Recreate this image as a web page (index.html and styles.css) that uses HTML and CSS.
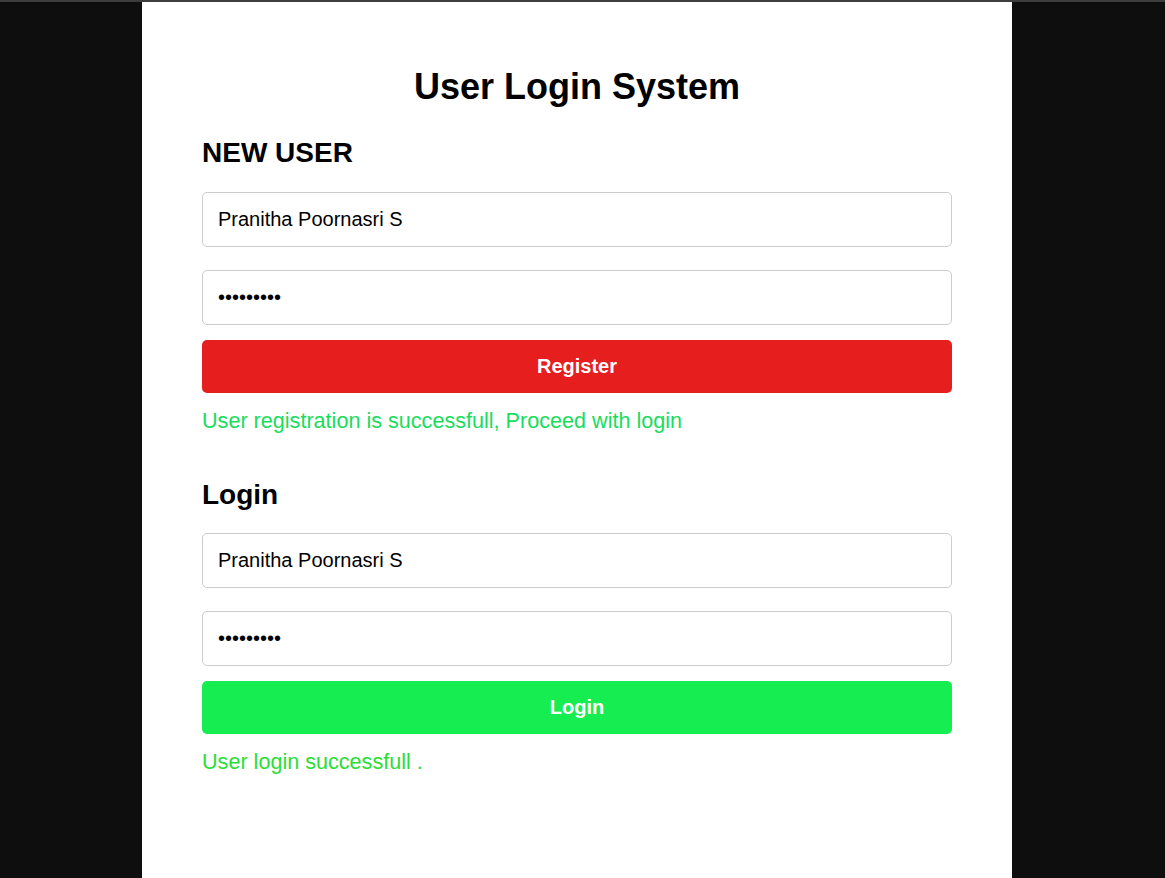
FILE: index.html
```html
<!DOCTYPE html>
<html lang="en">
<head>
<meta charset="utf-8">
<title>User Login System</title>
<link rel="stylesheet" href="styles.css">
</head>
<body>
<main class="card">
  <h1 class="title">User Login System</h1>
  <section class="block">
    <h2 class="block-title block-title-first">NEW USER</h2>
    <input class="field" type="text" value="Pranitha Poornasri S">
    <input class="field field-last" type="password" value="123456789">
    <button class="btn btn-red" type="button">Register</button>
    <p class="msg msg-reg">User registration is successfull, Proceed with login</p>
  </section>
  <section class="block">
    <h2 class="block-title">Login</h2>
    <input class="field" type="text" value="Pranitha Poornasri S">
    <input class="field field-last" type="password" value="123456789">
    <button class="btn btn-green" type="button">Login</button>
    <p class="msg msg-login">User login successfull .</p>
  </section>
</main>
</body>
</html>
```
FILE: styles.css
```css
html, body {
  margin: 0;
  padding: 0;
}
body {
  background: #0e0e0e;
  border-top: 2px solid #3d3d3d;
  min-height: 876px;
  font-family: "Liberation Sans", Arial, sans-serif;
}
.card {
  width: 870px;
  box-sizing: border-box;
  margin-left: 142px;
  min-height: 876px;
  background: #ffffff;
  padding: 64px 60px 40px;
}
.title {
  margin: 0 0 30px;
  font-size: 36px;
  line-height: 41px;
  font-weight: bold;
  text-align: center;
  color: #000;
}
.block + .block {
  margin-top: 46px;
}
.block-title {
  margin: 0 0 22px;
  font-size: 28px;
  line-height: 32px;
  font-weight: bold;
  color: #000;
}
.block-title-first {
  margin-bottom: 23px;
}
.field {
  display: block;
  width: 100%;
  box-sizing: border-box;
  margin: 0 0 23px;
  padding: 15px;
  font-family: "Liberation Sans", Arial, sans-serif;
  font-size: 20px;
  line-height: 23px;
  color: #000;
  background: #fff;
  border: 1px solid #cccccc;
  border-radius: 5px;
  outline: none;
}
.field-last {
  margin-bottom: 15px;
}
.btn {
  display: block;
  width: 100%;
  padding: 15px;
  border: none;
  border-radius: 5px;
  font-family: "Liberation Sans", Arial, sans-serif;
  font-size: 20px;
  line-height: 23px;
  font-weight: bold;
  color: #fff;
  cursor: pointer;
}
.btn-red {
  background: #e61e1e;
}
.btn-green {
  background: #16ed50;
}
.msg {
  margin: 15px 0 0;
  font-size: 21.6px;
  line-height: 25px;
}
.msg-reg {
  color: #18dd5c;
}
.msg-login {
  color: #2ade36;
}
```
